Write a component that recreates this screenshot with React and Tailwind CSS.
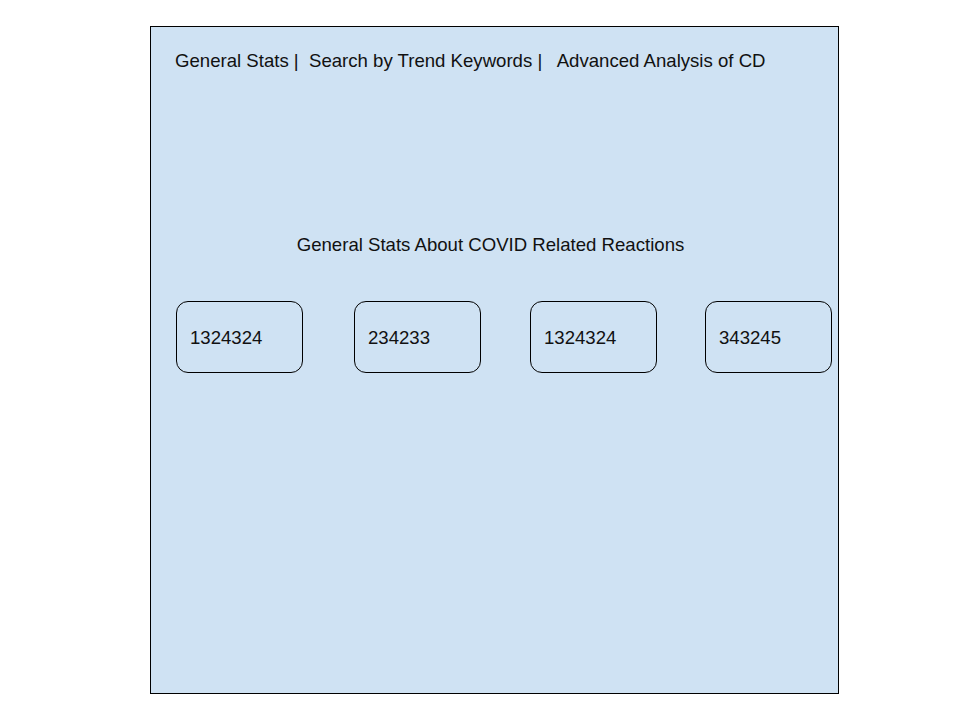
import React from "react";

const stats = [
  { value: "1324324", gap: "" },
  { value: "234233", gap: "ml-[51px]" },
  { value: "1324324", gap: "ml-[49px]" },
  { value: "343245", gap: "ml-[48px]" },
];

const App = () => {
  return (
    <div
      className="w-[960px] h-[720px] bg-white pt-[26px] pl-[150px]"
      style={{ fontFamily: '"Liberation Sans", Arial, sans-serif' }}
    >
      <div className="w-[689px] h-[668px] border border-black bg-[#cfe2f3] flex flex-col">
        {/* Top navigation */}
        <div className="pt-[23px] pl-[24px] text-[18.6px] leading-[22px] text-[#111] whitespace-pre">
          General Stats |  Search by Trend Keywords |   Advanced Analysis of CD
        </div>

        <h1 className="mt-[162px] text-center text-[18.6px] leading-[22px] text-[#111] pr-[8px]">
          General Stats About COVID Related Reactions
        </h1>

        <div className="mt-[45px] pl-[25px] flex">
          {stats.map((s, i) => (
            <div
              key={i}
              className={`${s.gap} w-[127px] h-[72px] border border-black rounded-[12px] flex items-center pl-[13px] pt-[2px] text-[18.6px] text-[#111]`}
            >
              {s.value}
            </div>
          ))}
        </div>
      </div>
    </div>
  );
};

export default App;
